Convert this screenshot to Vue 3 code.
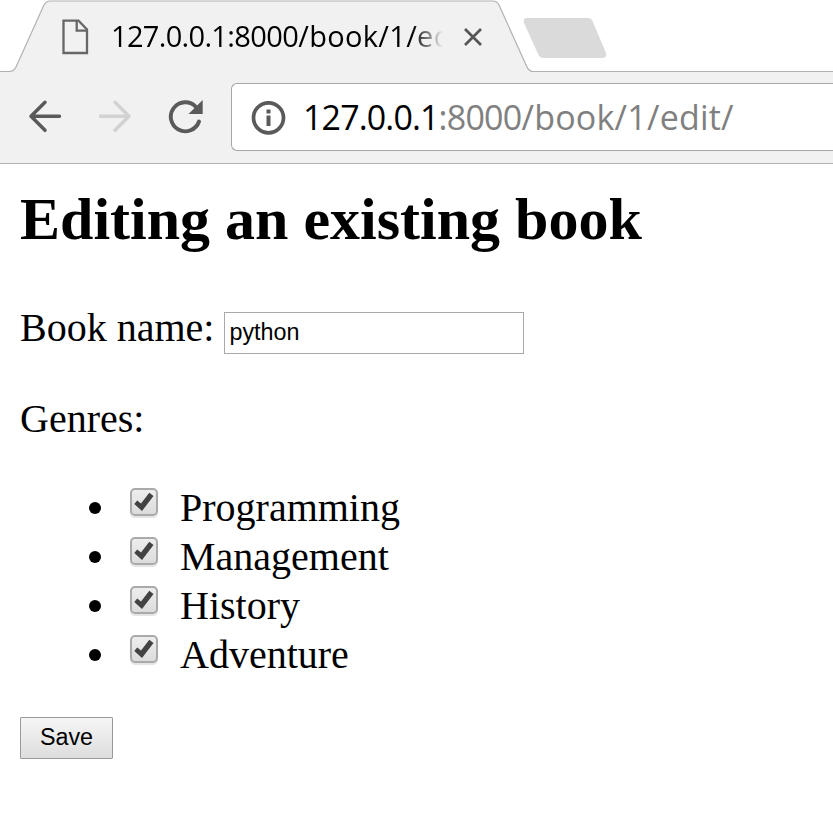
<script setup>
import { ref } from 'vue'

const name = ref('python')
const genres = ref([
  { label: 'Programming', checked: true },
  { label: 'Management', checked: true },
  { label: 'History', checked: true },
  { label: 'Adventure', checked: true },
])
</script>

<template>
  <div class="window">
    <header class="tabstrip">
      <svg class="tabshape" width="833" height="72" viewBox="0 0 833 72">
        <path d="M0 71.5H9Q14 71.5 16 67L43.500 6Q46 1 50 1H493Q497 1 499 5L526.500 66Q529 71.500 533 71.500H833V72H0Z" fill="#f1f1f1" />
        <path d="M0 71.500H9Q14 71.500 16 67L43.500 6Q46 1 50 1H493Q497 1 499 5L526.500 66Q529 71.500 533 71.500H833" fill="none" stroke="#b2b2b2" stroke-width="1.2" />
        <path d="M527 18H588Q591 18 592.500 21L606 53Q607 58 602 58H544Q540 58 538.500 55L524 23Q522.500 18 527 18Z" fill="#dadada" />
      </svg>
      <div class="tab">
        <svg class="file" width="27" height="36" viewBox="0 0 27 36" fill="none" stroke="#676767" stroke-width="2.300">
          <path d="M1.500 1.700H16.500L25 10.500V34H1.500Z" />
          <path d="M14.700 2V11.700H25" />
        </svg>
        <div class="title"><span class="host">127.0.0.1</span><span class="port">:8000</span><span class="path">/book/1/edit/</span></div>
        <svg class="close" width="20" height="20" viewBox="0 0 20 20" stroke="#555" stroke-width="2.700">
          <path d="M2 2L18 18M18 2L2 18" />
        </svg>
      </div>
    </header>

    <nav class="toolbar">
      <svg class="back" width="34" height="34" viewBox="0 0 34 34" fill="none" stroke="#5a5a5a" stroke-width="3.500" stroke-linecap="round" stroke-linejoin="round">
        <path d="M31.500 17.300H3M17 3.300L3 17.300L17 31.300" />
      </svg>
      <svg class="forward" width="34" height="34" viewBox="0 0 34 34" fill="none" stroke="#d2d2d2" stroke-width="3.500" stroke-linecap="round" stroke-linejoin="round">
        <path d="M2.500 17.300H31M17 3.300L31 17.300L17 31.300" />
      </svg>
      <svg class="reload" width="36" height="36" viewBox="0 0 36 36">
        <path d="M31 22.500A14.500 14.500 0 1 1 28 8" fill="none" stroke="#5a5a5a" stroke-width="3.900" stroke-linecap="round" />
        <path d="M34.700 1V15H20.500Z" fill="#5a5a5a" />
      </svg>
      <div class="omnibox">
        <svg class="info" width="35" height="34" viewBox="0 0 35 34">
          <circle cx="17.500" cy="16.800" r="15" fill="none" stroke="#5a5a5a" stroke-width="3.700" />
          <path d="M15.500 8.500h4v4h-4zM15.500 14.500h4v10.500h-4z" fill="#5a5a5a" />
        </svg>
        <div class="url"><span class="host">127.0.0.1</span><span class="port">:8000</span><span class="path">/book/1/edit/</span></div>
      </div>
    </nav>

    <main class="page">
      <h1>Editing an existing book</h1>
      <form @submit.prevent>
        <div class="field">
          <label for="name">Book name:</label>
          <input id="name" v-model="name" type="text">
        </div>
        <div class="legend">Genres:</div>
        <ul>
          <li v-for="g in genres" :key="g.label">
            <label class="choice">
              <input v-model="g.checked" type="checkbox">
              <span class="box">
                <svg v-if="g.checked" width="20" height="20" viewBox="0 0 20 20">
                  <path d="M3.200 8.600L7 11.600L15.300 0.700L19.500 4L8 19L0.300 12Z" fill="#424242" />
                </svg>
              </span>
              <span>{{ g.label }}</span>
            </label>
          </li>
        </ul>
        <button type="submit">Save</button>
      </form>
    </main>
  </div>
</template>

<style>
body {
  margin: 0;
  background: #fff;
}
</style>

<style scoped>
.window {
  height: 821px;
  overflow: hidden;
  background: #fff;
  color: #000;
}
svg {
  display: block;
  flex: none;
}
.tabstrip {
  position: relative;
  height: 72px;
}
.tabshape {
  position: absolute;
  top: 0;
  left: 0;
}
.tab {
  position: relative;
  display: flex;
  align-items: flex-start;
  padding-left: 62px;
}
.file {
  margin-top: 19px;
}
.title {
  width: 332px;
  margin: 15px 0 0 22px;
  overflow: hidden;
  white-space: nowrap;
  font: 29px/42px "Open Sans", sans-serif;
  -webkit-mask-image: linear-gradient(to right, #000 301px, transparent 332px);
  mask-image: linear-gradient(to right, #000 301px, transparent 332px);
}
.title .host {
  letter-spacing: -0.68px;
}
.title .port {
  letter-spacing: -0.57px;
}
.title .path {
  letter-spacing: 0.3px;
}
.close {
  margin: 27px 0 0 20px;
}
.toolbar {
  display: flex;
  align-items: flex-start;
  box-sizing: border-box;
  height: 92px;
  padding-left: 28px;
  background: #f1f1f1;
  border-bottom: 1px solid #b2b2b2;
}
.back {
  margin-top: 27px;
}
.forward {
  margin: 27px 0 0 36px;
}
.reload {
  margin: 27px 0 0 36px;
}
.omnibox {
  display: flex;
  flex: 1;
  box-sizing: border-box;
  height: 68px;
  margin: 11px 0 0 27px;
  background: #fff;
  border: 1px solid #a6a6a6;
  border-right: 0;
  border-radius: 6px 0 0 6px;
}
.info {
  margin: 17px 0 0 19px;
}
.url {
  margin: 9px 0 0 17px;
  white-space: nowrap;
  font: 34px/48px "Open Sans", sans-serif;
  color: #808080;
}
.url .host {
  letter-spacing: -0.87px;
  color: #000;
}
.url .port {
  letter-spacing: -0.77px;
}
.url .path {
  letter-spacing: 0.22px;
}
.page {
  padding: 21px 20px 0;
  font: 40px/49px "Liberation Serif", serif;
}
h1 {
  margin: 0 0 50px;
  font-size: 60px;
  line-height: 68px;
}
.field {
  display: flex;
  align-items: flex-start;
  height: 52px;
}
.field input {
  box-sizing: border-box;
  width: 300px;
  height: 42px;
  margin: 9px 0 0 10px;
  padding: 0 4px 2px;
  border: 1px solid #a9a9a9;
  border-radius: 0;
  outline: 0;
  font: 23.33px "Liberation Sans", sans-serif;
  color: #000;
}
.legend {
  margin-top: 39px;
}
ul {
  margin: 40px 0 38px;
  padding: 0 0 0 69px;
  list-style: none;
}
li {
  display: flex;
  height: 49px;
}
li::before {
  content: "";
  width: 12px;
  height: 12px;
  margin: 19px 29px 0 0;
  border-radius: 50%;
  background: #000;
}
.choice {
  display: flex;
  align-items: flex-start;
}
.choice input {
  display: none;
}
.box {
  box-sizing: border-box;
  width: 28px;
  height: 28px;
  margin: 5px 22px 0 0;
  padding: 2px;
  border: 2px solid #aaa;
  border-radius: 5px;
  background: linear-gradient(#ededed, #dcdcdc);
  box-shadow: 0 2px 1px #e4e4e4;
}
button {
  display: block;
  box-sizing: border-box;
  width: 93px;
  height: 42px;
  padding: 0 0 2px;
  border: 1px solid #999;
  border-radius: 1px;
  background: linear-gradient(#f6f6f6, #ddd);
  font: 23.33px "Liberation Sans", sans-serif;
  color: #000;
}
</style>
